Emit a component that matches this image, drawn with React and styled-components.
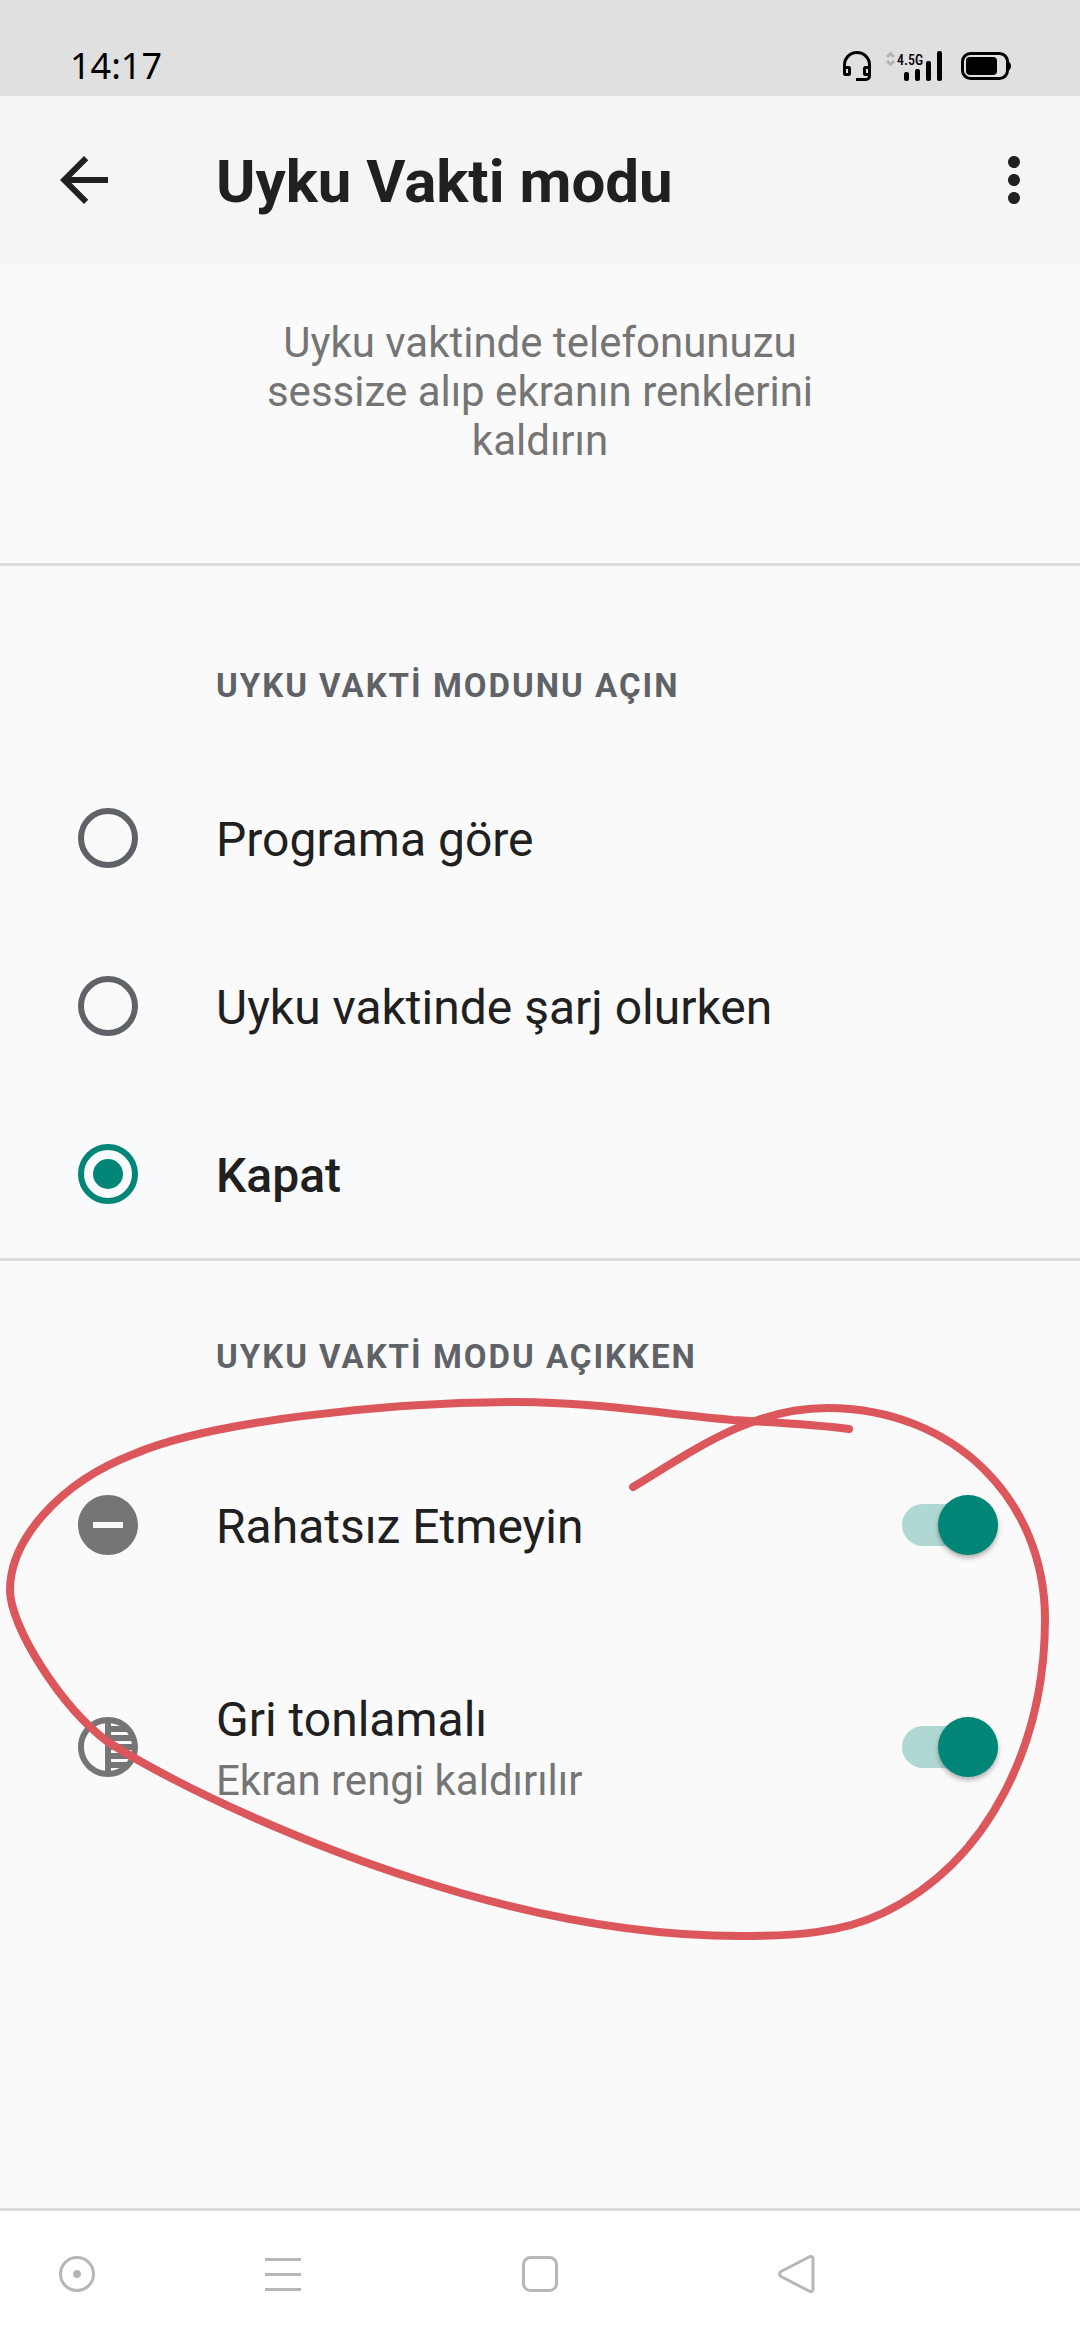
import React, { useState } from 'react';
import styled, { createGlobalStyle } from 'styled-components';
import { MdArrowBack, MdDoNotDisturbOn, MdMoreVert, MdTonality } from 'react-icons/md';

const START_OPTIONS = [
    { id: 'schedule', label: 'Programa göre' },
    { id: 'charging', label: 'Uyku vaktinde şarj olurken' },
    { id: 'off', label: 'Kapat' },
];

// pen stroke around the switches
const PEN_PATH = `
    M633 226
    C690 192 750 147 827 147
    C955 147 1045 240 1045 358
    C1045 480 991 600 883 652
    C840 673 790 675 740 675
    C630 675 520 652 415 618
    C320 588 190 533 108 481
    C60 445 10 365 10 329
    C10 280 58 222 134 193
    C210 160 390 141 518 141
    C590 141 665 153 733 159
    C780 162 810 163 849 168
`;

const HeadsetIcon = () => (
    <svg width="28" height="30" viewBox="0 0 28 30" fill="none" stroke="#000">
        <path d="M1.5 17v-3a12.5 12.5 0 0 1 25 0v11a3.5 3.5 0 0 1-3.5 3.5H13" strokeWidth="3" />
        <rect x="1.500" y="16.500" width="5" height="7" rx="1" strokeWidth="3" />
        <rect x="21.500" y="16.500" width="5" height="7" rx="1" strokeWidth="3" />
    </svg>
);

const SignalIcon = () => (
    <svg width="56" height="30" viewBox="0 0 56 30">
        <path d="M1 6l3.500-3.500L8 6M1 10l3.500 3.500L8 10" fill="none" stroke="#b4b4b4" strokeWidth="3" />
        <text x="11" y="14" fontFamily="'Roboto Condensed', Roboto, sans-serif" fontWeight="500" fontSize="14">4.5G</text>
        <rect x="18" y="21" width="5" height="9" rx="2" />
        <rect x="29" y="18" width="5" height="12" rx="2" />
        <rect x="40" y="10" width="5" height="20" rx="2" />
        <rect x="51" y="0" width="5" height="30" rx="2" />
    </svg>
);

const BatteryIcon = () => (
    <svg width="50" height="28" viewBox="0 0 50 28">
        <rect x="1.500" y="1.500" width="45" height="25" rx="8" fill="none" stroke="#000" strokeWidth="3" />
        <rect x="5" y="5" width="31" height="18" rx="4" />
        <path d="M47 9c2 1 3 3 3 5s-1 4-3 5z" />
    </svg>
);

const NavIcon = ({ children }) => (
    <svg width="42" height="42" viewBox="0 0 42 42" fill="none" stroke="#b7b7b7" strokeWidth="3">
        {children}
    </svg>
);

const App = () => {
    const [start, setStart] = useState('off');

    return (
        <Page>
            <GlobalStyle />
            <StatusBar>
                <Clock>14:17</Clock>
                <HeadsetIcon />
                <SignalIcon />
                <BatteryIcon />
            </StatusBar>
            <AppBar>
                <IconButton aria-label="Geri"><MdArrowBack /></IconButton>
                <Title>Uyku Vakti modu</Title>
                <IconButton aria-label="Diğer seçenekler"><MdMoreVert /></IconButton>
            </AppBar>
            <Main>
                <Description>Uyku vaktinde telefonunuzu sessize alıp ekranın renklerini kaldırın</Description>
                <Section>
                    <SectionTitle $space="100px">UYKU VAKTİ MODUNU AÇIN</SectionTitle>
                    {START_OPTIONS.map(({ id, label }) => (
                        <OptionRow key={id} $selected={start === id}>
                            <Radio name="start" checked={start === id} onChange={() => setStart(id)} />
                            <RowText>{label}</RowText>
                        </OptionRow>
                    ))}
                </Section>
                <MarkedSection>
                    <SectionTitle $space="76px">UYKU VAKTİ MODU AÇIKKEN</SectionTitle>
                    <SwitchRow>
                        <MdDoNotDisturbOn />
                        <RowText>Rahatsız Etmeyin</RowText>
                        <Switch defaultChecked />
                    </SwitchRow>
                    <SwitchRow $tall>
                        <MdTonality />
                        <RowText>
                            Gri tonlamalı
                            <Summary>Ekran rengi kaldırılır</Summary>
                        </RowText>
                        <Switch defaultChecked />
                    </SwitchRow>
                    <PenMark viewBox="0 0 1080 700" aria-hidden="true">
                        <path d={PEN_PATH} />
                    </PenMark>
                </MarkedSection>
            </Main>
            <NavBar>
                <NavButton aria-label="Yardımcı top">
                    <NavIcon>
                        <circle cx="21" cy="21" r="16.500" />
                        <circle cx="21" cy="21" r="4" fill="#b7b7b7" stroke="none" />
                    </NavIcon>
                </NavButton>
                <NavButton aria-label="Son uygulamalar">
                    <NavIcon><path d="M3 6.500h36M3 21.500h36M3 36.500h36" /></NavIcon>
                </NavButton>
                <NavButton aria-label="Ana ekran">
                    <NavIcon><rect x="4.500" y="4.500" width="33" height="33" rx="7" /></NavIcon>
                </NavButton>
                <NavButton aria-label="Geri git">
                    <NavIcon>
                        <path d="M34 3.500L5 18.500Q2 21 5 23.500L34 38.500Q37 39 37 36V6Q37 3 34 3.500z" strokeLinejoin="round" />
                    </NavIcon>
                </NavButton>
            </NavBar>
        </Page>
    );
};

export default App;

const GlobalStyle = createGlobalStyle`
    * {
        box-sizing: border-box;
    }

    body {
        margin: 0;
        font-family: Roboto, sans-serif;
        color: #202020;
        background-color: #fafafa;
    }
`;

const Page = styled.div`
    display: flex;
    flex-direction: column;
    min-height: 100vh;
`;

const StatusBar = styled.div`
    display: flex;
    align-items: center;
    height: 96px;
    padding: 36px 69px 0 70px;
    background-color: #e0e0e0;

    svg {
        margin-left: 15px;
    }

    svg:last-child {
        margin-left: 19px;
    }
`;

const Clock = styled.span`
    flex: 1;
    font-family: 'Noto Sans', sans-serif;
    font-size: 36px;
    line-height: 48px;
    color: black;
`;

const AppBar = styled.header`
    display: flex;
    align-items: center;
    height: 168px;
    padding: 0 30px 0 48px;
    background-color: #f5f5f5;
`;

const IconButton = styled.button`
    display: flex;
    padding: 0;
    border: none;
    background: none;
    color: #202020;
    font-size: 72px;
`;

const Title = styled.h1`
    flex: 1;
    margin: 0;
    padding: 4px 0 0 96px;
    font-size: 60px;
    font-weight: 700;
    line-height: 72px;
`;

const Main = styled.main`
    display: flex;
    flex-direction: column;
    flex: 1;
`;

const Description = styled.p`
    margin: 0;
    padding: 54px 240px 98px;
    font-size: 42px;
    line-height: 49px;
    text-align: center;
    color: #757575;
`;

const Section = styled.section`
    border-top: 3px solid #dadce0;
`;

const MarkedSection = styled(Section)`
    position: relative;
    flex: 1;
`;

const SectionTitle = styled.h2`
    margin: 0;
    padding: ${({ $space }) => $space} 78px 48px 216px;
    font-size: 33px;
    font-weight: 700;
    line-height: 40px;
    letter-spacing: 2px;
    color: #5f6368;
`;

const OptionRow = styled.label`
    display: flex;
    align-items: center;
    gap: 78px;
    min-height: 168px;
    padding: 0 78px;
    font-weight: ${({ $selected }) => ($selected ? 500 : 400)};
    background-color: ${({ $selected }) => ($selected ? '#f8fafc' : 'transparent')};
`;

const Radio = styled.input.attrs({ type: 'radio' })`
    appearance: none;
    flex: none;
    display: grid;
    place-items: center;
    width: 60px;
    height: 60px;
    margin: 0;
    border: 6px solid #5f6368;
    border-radius: 50%;

    &:checked {
        border-color: #018577;
    }

    &:checked::before {
        content: '';
        width: 30px;
        height: 30px;
        border-radius: 50%;
        background-color: #018577;
    }
`;

const RowText = styled.span`
    flex: 1;
    padding-top: 4px;
    font-size: 48px;
    line-height: 60px;
`;

const SwitchRow = styled.label`
    display: flex;
    align-items: center;
    gap: 72px;
    min-height: ${({ $tall }) => ($tall ? '244px' : '200px')};
    padding: 0 82px 0 72px;

    > svg {
        flex: none;
        font-size: 72px;
        color: #757575;
    }
`;

const Summary = styled.small`
    display: block;
    padding-top: 4px;
    font-size: 42px;
    line-height: 54px;
    color: #757575;
`;

const Switch = styled.input.attrs({ type: 'checkbox', role: 'switch' })`
    appearance: none;
    position: relative;
    flex: none;
    width: 96px;
    height: 42px;
    margin: 0;
    border-radius: 21px;
    background-color: #c4c4c4;

    &::before {
        content: '';
        position: absolute;
        top: -9px;
        left: 0;
        width: 60px;
        height: 60px;
        border-radius: 50%;
        background-color: white;
        box-shadow: 0 3px 5px rgba(0, 0, 0, 0.3);
    }

    &:checked {
        background-color: #b0d8d2;
    }

    &:checked::before {
        left: 36px;
        background-color: #018577;
    }
`;

const PenMark = styled.svg`
    position: absolute;
    top: 0;
    left: 0;
    width: 100%;
    pointer-events: none;
    fill: none;
    stroke: #dc575b;
    stroke-width: 8;
    stroke-linecap: round;
`;

const NavBar = styled.nav`
    display: grid;
    grid-template-columns: 154px 1fr 1fr 1fr 154px;
    height: 132px;
    padding-bottom: 3px;
    border-top: 3px solid #dadada;
    background-color: white;
`;

const NavButton = styled.button`
    display: flex;
    align-items: center;
    justify-content: center;
    padding: 0;
    border: none;
    background: none;
`;
